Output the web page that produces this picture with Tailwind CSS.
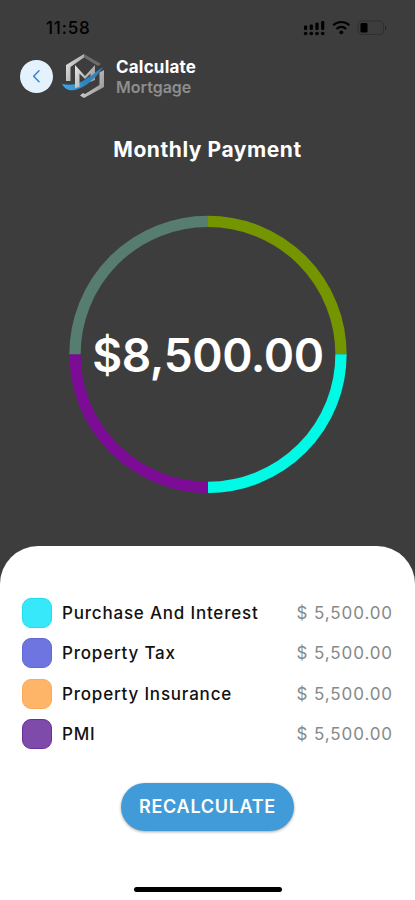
<!DOCTYPE html>
<html lang="en">
<head>
    <meta charset="UTF-8">
    <meta name="viewport" content="width=device-width, initial-scale=1.0">
    <title>Calculate Mortgage</title>
    <script src="https://cdn.jsdelivr.net/npm/@tailwindcss/browser@4"></script>
</head>
<body class="bg-[#3d3d3d] font-['Inter',sans-serif]">
    <div class="flex flex-col h-[900px] w-[415px] overflow-hidden">
        <!-- Status bar -->
        <div class="flex items-center justify-between h-14 pl-[46px] pr-[27px] shrink-0">
            <span class="text-[17px] font-medium leading-none tracking-[0.8px] text-black">11:58</span>
            <svg class="w-[85px] h-[20px]" viewBox="0 0 85 20">
                <g fill="#000">
                    <rect x="1" y="7.5" width="3.2" height="4.5" rx="1"/>
                    <rect x="6.7" y="6.5" width="3.2" height="5.5" rx="1"/>
                    <rect x="12.4" y="4.8" width="3.2" height="7.2" rx="1"/>
                    <rect x="18.1" y="3" width="3.2" height="9" rx="1"/>
                    <circle cx="2.6" cy="15.5" r="1.8"/>
                    <circle cx="8.3" cy="15.5" r="1.8"/>
                    <circle cx="14" cy="15.5" r="1.8"/>
                    <circle cx="19.7" cy="15.5" r="1.8"/>
                    <circle cx="38.3" cy="14.3" r="1.9"/>
                    <rect x="57.5" y="5" width="7" height="9.5" rx="1.3"/>
                </g>
                <g fill="none" stroke="#000" stroke-width="2.1">
                    <path d="M30.2 7.3a11.5 11.5 0 0 1 16.2 0"/>
                    <path d="M33.5 10.9a6.8 6.8 0 0 1 9.6 0"/>
                </g>
                <rect x="55" y="3" width="25.5" height="13.5" rx="3.5" fill="none" stroke="#2f2f2f"/>
                <path d="M82 7.5c1.8.8 1.8 4 0 4.8z" fill="#262626"/>
            </svg>
        </div>

        <!-- Header -->
        <div class="flex items-center h-[40px] pl-[20px] shrink-0">
            <button class="flex items-center justify-center w-[33px] h-[33px] rounded-full bg-[#e4f2fd]" title="Back">
                <svg class="w-4 h-4" viewBox="0 0 16 16" fill="none" stroke="#3584d4" stroke-width="1.5" stroke-linecap="round" stroke-linejoin="round">
                    <path d="M10 2.7 4.7 8.2l5.3 5.5"/>
                </svg>
            </button>
            <svg class="w-[44px] h-[46px] ml-[9px]" viewBox="0 0 44 46">
                <defs>
                    <linearGradient id="silver" x1="0" y1="0" x2="1" y2="0.6">
                        <stop offset="0" stop-color="#e8e8e8"/>
                        <stop offset="1" stop-color="#9c9c9c"/>
                    </linearGradient>
                    <linearGradient id="swoosh" x1="0" y1="0" x2="1" y2="0">
                        <stop offset="0" stop-color="#3fa9ea"/>
                        <stop offset="1" stop-color="#2c6f9f"/>
                    </linearGradient>
                </defs>
                <path d="M4 28V12L22 1v3.5L8.5 14v14z" fill="url(#silver)"/>
                <path d="M22 1 39 11l-3 2-14-8.5z" fill="#6c6c6c"/>
                <path d="M42 17v17L22 45l-4-2.5 3-2.5 2 1 14.5-9V19.5z" fill="url(#silver)"/>
                <path d="M0 31C7 32.5 14 32 21 28L41 14C34 26 24 33 16 36 10 38.5 4 38 0 31z" fill="url(#swoosh)"/>
                <path d="M13 35V12l10 11 10-11v15l-4.5 2V20.5L23 26l-5.5-5.5V34z" fill="url(#silver)"/>
                <path d="M20 29.5 41 14c-6 9-12 14.5-19 18.5z" fill="#2f83bd"/>
            </svg>
            <div class="flex flex-col ml-[10px] pt-[2px]">
                <span class="text-[17px] font-bold leading-[20px] tracking-[0.2px] text-white">Calculate</span>
                <span class="text-[16px] font-semibold leading-[20px] text-[#8e8e8e]">Mortgage</span>
            </div>
        </div>

        <h1 class="mt-[42px] text-center text-[21px] font-bold leading-[24px] tracking-[0.55px] text-white">Monthly Payment</h1>

        <!-- Donut chart -->
        <div class="grid place-items-center mt-[53px] ml-px h-[278px] shrink-0">
            <svg class="col-start-1 row-start-1 w-[278px] h-[278px]" viewBox="-139 -139.3 278 278" fill="none" stroke-width="11.3">
                <path d="M0-133A133 133 0 0 1 133 0" stroke="#759500"/>
                <path d="M133 0A133 133 0 0 1 0 133" stroke="#00fae6"/>
                <path d="M0 133A133 133 0 0 1-133 0" stroke="#7c0b96"/>
                <path d="M-133 0A133 133 0 0 1 0-133" stroke="#577d70"/>
            </svg>
            <span class="col-start-1 row-start-1 pt-[2px] text-[46px] font-semibold leading-none tracking-[-0.4px] text-white">$8,500.00</span>
        </div>

        <!-- Breakdown sheet -->
        <div class="flex flex-col items-center grow mt-[53px] pt-[52px] px-[22px] rounded-t-[38px] bg-white">
            <div class="flex flex-col gap-[10.4px] w-full text-[17px] tracking-[0.8px]">
                <div class="flex items-center h-[30px]">
                    <span class="w-[30px] h-[30px] rounded-[9px] border border-[#1de0ef] bg-[#36e8fa]"></span>
                    <span class="ml-[10px] pt-px font-medium text-[#111]">Purchase And Interest</span>
                    <span class="ml-auto pt-px tracking-[0.9px] text-[#868a8a]">$ 5,500.00</span>
                </div>
                <div class="flex items-center h-[30px]">
                    <span class="w-[30px] h-[30px] rounded-[9px] border border-[#6068d5] bg-[#6f75e0]"></span>
                    <span class="ml-[10px] pt-px font-medium text-[#111]">Property Tax</span>
                    <span class="ml-auto pt-px tracking-[0.9px] text-[#868a8a]">$ 5,500.00</span>
                </div>
                <div class="flex items-center h-[30px]">
                    <span class="w-[30px] h-[30px] rounded-[9px] border border-[#f9ab59] bg-[#feb568]"></span>
                    <span class="ml-[10px] pt-px font-medium text-[#111]">Property Insurance</span>
                    <span class="ml-auto pt-px tracking-[0.9px] text-[#868a8a]">$ 5,500.00</span>
                </div>
                <div class="flex items-center h-[30px]">
                    <span class="w-[30px] h-[30px] rounded-[9px] border border-[#6b2c9e] bg-[#7f4bab]"></span>
                    <span class="ml-[10px] pt-px font-medium text-[#111]">PMI</span>
                    <span class="ml-auto pt-px tracking-[0.9px] text-[#868a8a]">$ 5,500.00</span>
                </div>
            </div>
            <button class="mt-[33.8px] w-[173px] h-[48px] shrink-0 rounded-full bg-[#419bd8] text-[18px] font-semibold tracking-[0.7px] text-white shadow-[0_1px_3px_rgba(0,0,0,0.35)]">RECALCULATE</button>
            <div class="mt-[56px] w-[148px] h-[5px] shrink-0 rounded-full bg-black"></div>
        </div>
    </div>
</body>
</html>
